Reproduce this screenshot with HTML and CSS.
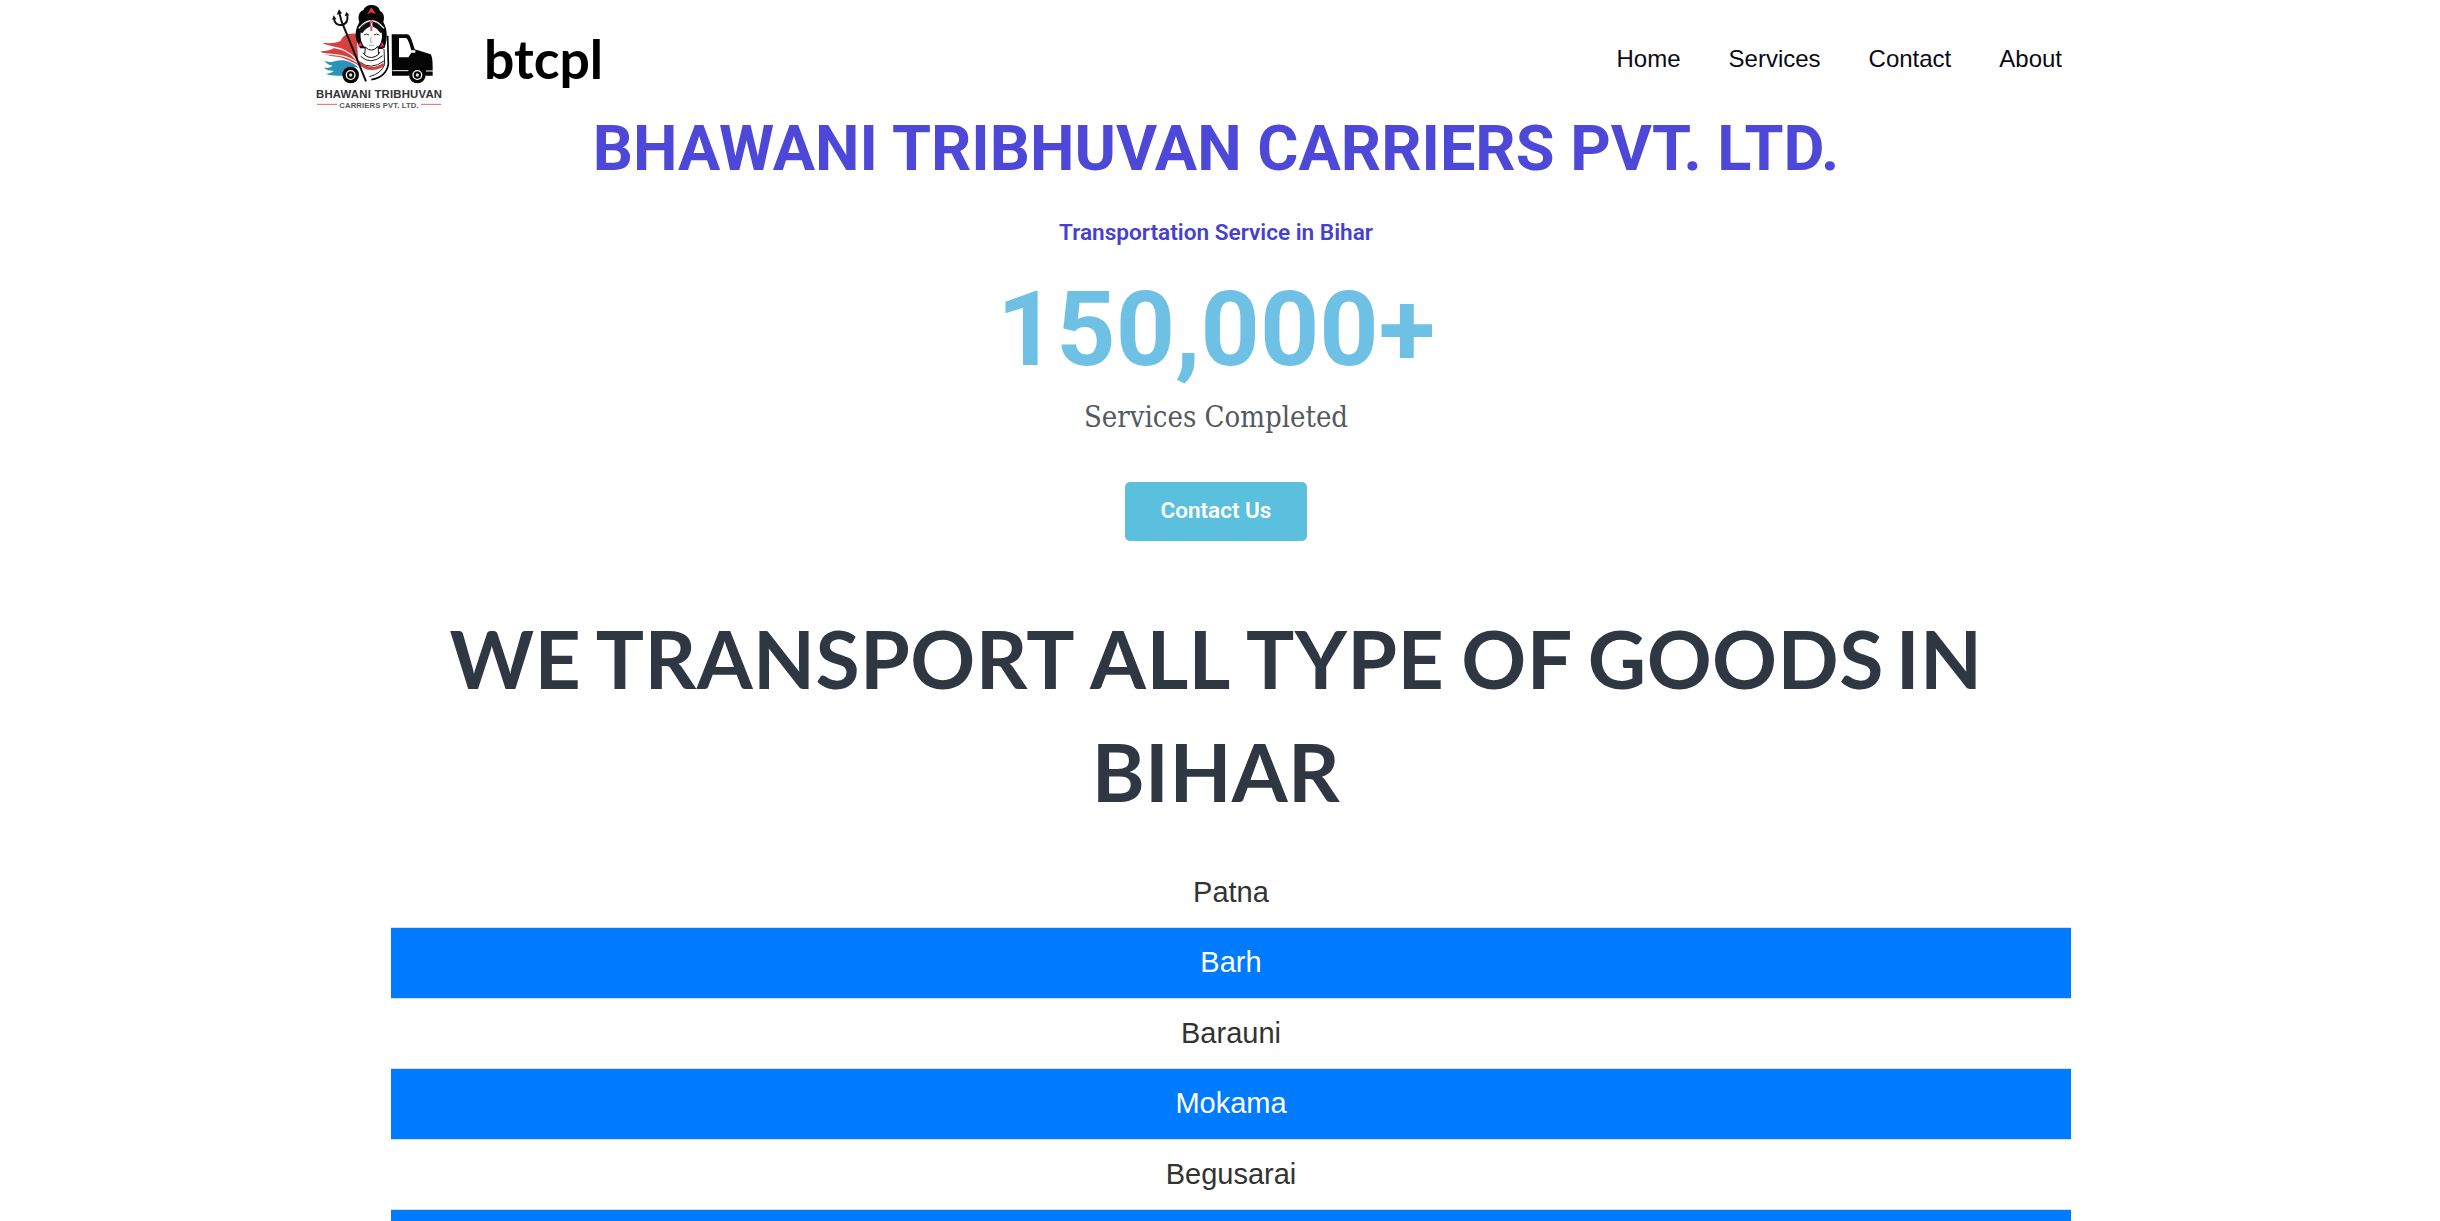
FILE: index.html
```html
<!DOCTYPE html>
<html lang="en">
<head>
<meta charset="utf-8">
<title>btcpl</title>
<link rel="stylesheet" href="styles.css">
</head>
<body>
<header class="site-header">
  <a class="brand">
    <svg class="logo" viewBox="0 0 480 360" role="img" aria-label="Bhawani Tribhuvan Carriers Pvt. Ltd.">
      <path fill="#d8403f" d="M168 104C140 102 126 112 122 126C100 134 86 133 68 131C80 142 96 144 104 146C90 154 76 156 62 157C76 172 104 172 118 174C140 180 160 190 182 203L256 206L252 150Z"/>
      <path fill="none" stroke="#fff" stroke-width="4" d="M72 137C108 150 132 142 170 182M66 163C110 170 140 164 184 200"/>
      <path fill="#2c93b8" d="M176 206C150 182 124 180 104 187C94 191 84 188 74 186C80 196 92 199 98 200C90 207 80 206 72 206C80 215 96 215 102 216C94 222 86 223 78 225C90 230 108 230 128 230C130 210 144 202 176 206Z"/>
      <path fill="#fff" d="M170 110L176 204Q184 238 214 242Q252 238 262 208L264 108Z"/>
      <path fill="none" stroke="#000" stroke-width="5" d="M263 110L265 196Q258 234 214 242"/>
      <path fill="none" stroke="#222" stroke-width="3" d="M252 150L254 196Q244 224 208 233M182 172Q212 200 248 170M188 162Q212 184 240 160M178 188Q212 216 252 186"/>
      <path fill="none" stroke="#d8403f" stroke-width="9" d="M176 190Q210 224 252 196"/>
      <path fill="#050505" d="M176 138C160 112 168 86 178 70C170 46 184 34 190 34C196 12 236 12 240 36C256 44 252 62 250 70C262 90 264 116 254 146L246 150L180 148Z"/>
      <path fill="#fff" d="M214 66C188 68 180 94 182 116C184 138 198 150 214 156C232 150 244 138 246 114C246 88 238 68 214 66Z"/>
      <path fill="#fff" stroke="#111" stroke-width="3" d="M196 144L194 168Q214 184 236 166L234 142Q214 164 196 144Z"/>
      <path fill="#111" d="M180 100C182 84 196 70 212 66V82Q196 88 188 102ZM248 100C246 84 234 70 217 66V82Q232 88 241 102Z"/>
      <path fill="none" stroke="#fff" stroke-width="4" d="M176 88Q214 42 252 88"/>
      <path fill="none" stroke="#333" stroke-width="3" d="M192 108Q199 102 207 108M222 108Q230 102 238 108"/>
      <path fill="none" stroke="#aaa" stroke-width="3" d="M214 112L211 129H218M207 139H222"/>
      <path fill="#e33a32" d="M202 46L214 25L228 46L214 40Z"/>
      <circle cx="214" cy="68" r="5" fill="#f0468a"/><path d="M214 82V96" stroke="#f0468a" stroke-width="6"/>
      <path fill="#f21c78" d="M180 128L188 140L174 143ZM246 128L253 142L240 144Z"/>
      <path fill="#050505" d="M275 106H322Q330 108 334 120L344 151L392 166Q398 174 398 204V230H376A26 26 0 0 0 326 230H276Z"/>
      <path fill="#fff" d="M297 117H318Q325 119 334 154H346V161H334L325 175H297Z"/>
      <path stroke="#fff" stroke-width="3" d="M277 215H325M378 216H400"/>
      <g fill="#fff" stroke="#050505" stroke-width="10"><circle cx="152" cy="228" r="20"/><circle cx="352" cy="228" r="20"/></g>
      <circle cx="152" cy="228" r="11"/><circle cx="352" cy="228" r="11"/>
      <circle cx="152" cy="228" r="5" fill="#ddd"/><circle cx="352" cy="228" r="5" fill="#ddd"/>
      <path fill="none" stroke="#111" stroke-width="6" d="M126 70L198 247M102 57Q104 80 124 78Q146 74 142 49M118 42L126 72"/>
      <path fill="#111" d="M96 62L101 49L109 60ZM110 47L117 31L126 43ZM134 52L139 38L148 49Z"/>
      <text class="logo-name" x="48" y="297" textLength="378">BHAWANI TRIBHUVAN</text>
      <text class="logo-sub" x="118" y="326" textLength="238">CARRIERS PVT. LTD.</text>
      <path stroke="#d66" stroke-width="3" d="M51 316H111M363 316H424"/>
    </svg>
    <span class="brand-name">btcpl</span>
  </a>
  <nav class="menu"><a>Home</a><a>Services</a><a>Contact</a><a>About</a></nav>
</header>
<main>
  <section class="hero">
    <h1>BHAWANI TRIBHUVAN CARRIERS PVT. LTD.</h1>
    <p class="tagline">Transportation Service in Bihar</p>
    <div class="counter">150,000+</div>
    <div class="counter-title">Services Completed</div>
    <a class="button">Contact Us</a>
  </section>
  <h2>WE TRANSPORT <span class="wide">ALL</span> <span class="wide">TYPE</span> OF GOODS <span class="tight">IN</span> BIHAR</h2>
  <ul class="cities"><li>Patna</li><li>Barh</li><li>Barauni</li><li>Mokama</li><li>Begusarai</li><li></li></ul>
</main>
</body>
</html>
```
FILE: styles.css
```css
* { box-sizing: border-box; }
html { overflow: hidden; }
body { margin: 0; height: 1221px; overflow: hidden; background: #fff; font-family: "Liberation Sans", Arial, sans-serif; }
.site-header { display: flex; justify-content: space-between; align-items: center; width: 1840px; height: 118px; margin: 0 auto; padding-right: 78px; }
.brand { display: flex; align-items: center; height: 118px; }
.logo { width: 160px; height: 120px; flex: none; }
.logo-name { font: 700 34px "Liberation Sans", sans-serif; fill: #333; }
.logo-sub { font: 700 23px "Liberation Sans", sans-serif; fill: #555; }
.brand-name { margin: 0 0 2px 24px; font: 700 53.5px/80px Lato, sans-serif; color: #000; }
.menu { display: flex; gap: 48px; font-size: 24px; line-height: 36px; color: #0a0a14; }
.hero { display: flex; flex-direction: column; align-items: center; width: 2432px; }
h1 { margin: -7px 0 0; font: 700 63px/76px Roboto, sans-serif; color: #4d48d8; white-space: nowrap; }
.tagline { margin: 29px 0 0; font: 600 22.6px/34px Roboto, sans-serif; color: #4640ce; }
.counter { margin-top: 28px; font: 700 103.5px/104px Roboto, sans-serif; color: #6ec1e4; }
.counter-title { margin-top: 14px; font: 29px/43px "Roboto Slab", "DejaVu Serif Condensed", "DejaVu Serif", serif; color: #54595f; }
.button { margin-top: 43px; width: 182px; height: 59px; border-radius: 5px; background: #5bc0de; color: #fff; text-align: center; font: 600 22.5px/57px Roboto, sans-serif; }
h2 { width: 1680px; margin: 61px auto 0 376px; text-align: center; font: 700 80.5px/113px Lato, sans-serif; letter-spacing: 0.4px; word-spacing: -2.9px; color: #2f3742; }
h2 .wide { margin-left: 0.5px; }
h2 .tight { margin-left: -5px; }
.cities { width: 1680px; margin: 29.5px 0 0 391px; padding: 0; list-style: none; text-align: center; font-size: 29px; color: #333; }
.cities li { height: 70.6px; line-height: 69px; border-bottom: 1px solid #ddd; }
.cities li:nth-child(even) { background: #007bff; color: #fff; }
```
